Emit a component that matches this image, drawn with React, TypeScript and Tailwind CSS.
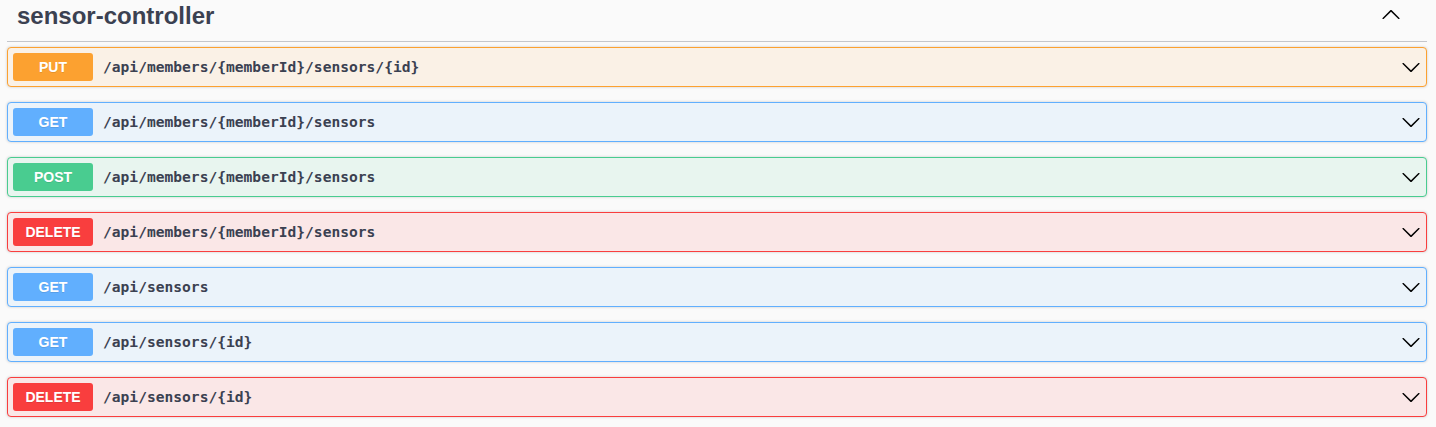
import React from 'react';

type Method = 'PUT' | 'GET' | 'POST' | 'DELETE';

interface Operation {
  method: Method;
  path: string;
}

const operations: Operation[] = [
  { method: 'PUT', path: '/api/members/{memberId}/sensors/{id}' },
  { method: 'GET', path: '/api/members/{memberId}/sensors' },
  { method: 'POST', path: '/api/members/{memberId}/sensors' },
  { method: 'DELETE', path: '/api/members/{memberId}/sensors' },
  { method: 'GET', path: '/api/sensors' },
  { method: 'GET', path: '/api/sensors/{id}' },
  { method: 'DELETE', path: '/api/sensors/{id}' },
];

const blockStyles: Record<Method, { block: string; badge: string }> = {
  PUT: { block: 'bg-[#faf1e6] border-[#fca130]', badge: 'bg-[#fca130]' },
  GET: { block: 'bg-[#ebf3fa] border-[#61affe]', badge: 'bg-[#61affe]' },
  POST: { block: 'bg-[#e8f5ef] border-[#49cc90]', badge: 'bg-[#49cc90]' },
  DELETE: { block: 'bg-[#fae7e7] border-[#f93e3e]', badge: 'bg-[#f93e3e]' },
};

const ArrowDown = () => (
  <svg className="w-5 h-5 shrink-0" viewBox="0 0 20 20" fill="#000">
    <path d="M17.418 6.109c.272-.268.709-.268.979 0s.271.701 0 .969l-7.908 7.83c-.27.268-.707.268-.979 0l-7.908-7.83c-.27-.268-.27-.701 0-.969.271-.268.709-.268.979 0L10 13.25l7.418-7.141z" />
  </svg>
);

const ArrowUp = () => (
  <svg className="w-5 h-5 shrink-0 mt-[2px]" viewBox="0 0 20 20" fill="#000">
    <path d="M17.418 14.908c.272.268.709.268.979 0s.271-.701 0-.969l-7.908-7.83c-.27-.268-.707-.268-.979 0l-7.908 7.83c-.27.268-.27.701 0 .969.271.268.709.268.979 0L10 7.767l7.418 7.141z" />
  </svg>
);

const OperationRow: React.FC<{ op: Operation }> = ({ op }) => {
  const s = blockStyles[op.method];
  return (
    <div className={`mb-[15px] border rounded-[4px] shadow-[0_0_3px_rgba(0,0,0,0.19)] ${s.block}`}>
      <div className="flex items-center p-[5px] cursor-pointer">
        <span
          className={`w-[80px] h-[28px] shrink-0 rounded-[3px] flex items-center justify-center text-white text-[14px] font-bold [text-shadow:0_1px_0_rgba(0,0,0,0.1)] ${s.badge}`}
          style={{ fontFamily: '"Liberation Sans", Arial, sans-serif' }}
        >
          {op.method}
        </span>
        <span
          className="flex-1 px-[10px] text-[14.6px] font-bold text-[#3b4151]"
          style={{ fontFamily: '"DejaVu Sans Mono", monospace' }}
        >
          {op.path}
        </span>
        <ArrowDown />
      </div>
    </div>
  );
};

export default function App() {
  return (
    <div className="min-h-[427px] bg-[#fafafa] pl-[7px] pr-[9px]" style={{ fontFamily: '"Liberation Sans", Arial, sans-serif' }}>
      <div className="flex items-start justify-between pt-[2px] pb-[11px] pl-[10px] pr-[26px] mb-[5px] border-b border-[#c4c6cb]">
        <h3 className="text-[24px] leading-[28px] font-bold text-[#3b4151]">sensor-controller</h3>
        <ArrowUp />
      </div>
      <div>
        {operations.map((op, i) => (
          <OperationRow key={i} op={op} />
        ))}
      </div>
    </div>
  );
}
